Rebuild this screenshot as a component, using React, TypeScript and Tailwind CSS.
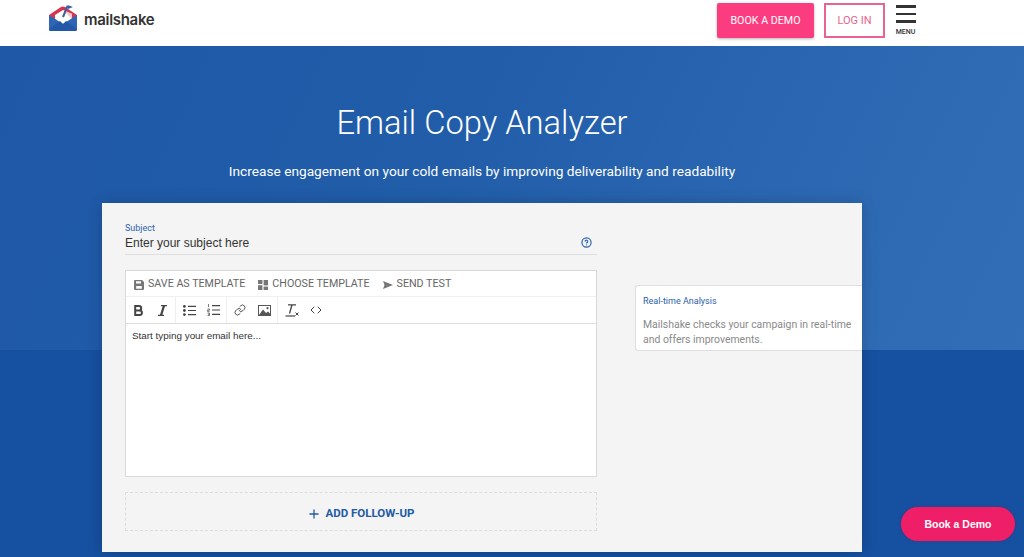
import { Link, Code, Plus, CircleHelp } from "lucide-react";

function Logo() {
  return (
    <svg width="30" height="28" viewBox="0 0 30 28">
      <path d="M1 11 L13 3 Q15 2 17 3 L29 11 L29 25 Q29 27 27 27 L3 27 Q1 27 1 25 Z" fill="#d9344f" />
      <path d="M7 11 L15 6 L24 10 L24 17 L15 21 L7 16 Z" fill="#ffffff" />
      <path d="M15 6 L24 10 L24 15 Z" fill="#f3c9d2" />
      <path d="M1 11 L15 20 L29 11 L29 25 Q29 27 27 27 L3 27 Q1 27 1 25 Z" fill="#2f66b5" />
      <path d="M1 25 L12 17 L15 20 L18 17 L29 25 Q29 27 27 27 L3 27 Q1 27 1 25 Z" fill="#2459a8" />
      <path d="M15 13 L19.5 2" stroke="#3d5f9e" strokeWidth="2" fill="none" />
      <path d="M19.5 1 L25 3 L20 5 Z" fill="#3d5f9e" />
    </svg>
  );
}

function SaveIcon() {
  return (
    <svg width="10" height="10" viewBox="0 0 10 10" className="shrink-0">
      <path fillRule="evenodd" d="M0 1 Q0 0 1 0 H8 L10 2 V9 Q10 10 9 10 H1 Q0 10 0 9 Z M2 1.2 V3.6 H7 V1.2 Z M2.2 6 V8.8 H7.8 V6 Z" fill="#777" />
    </svg>
  );
}

function GridIcon() {
  return (
    <svg width="10" height="10" viewBox="0 0 10 10" className="shrink-0">
      <rect x="0" y="0" width="4.4" height="4" fill="#777" />
      <rect x="5.6" y="0" width="4.4" height="5.4" fill="#777" />
      <rect x="0" y="5.2" width="4.4" height="4.8" fill="#777" />
      <rect x="5.6" y="6.6" width="4.4" height="3.4" fill="#777" />
    </svg>
  );
}

function SendIcon() {
  return (
    <svg width="10" height="8" viewBox="0 0 10 8" className="shrink-0">
      <path d="M0 0 L10 4 L0 8 L1.5 4 Z" fill="#777" />
    </svg>
  );
}

function BoldIcon() {
  return (
    <svg width="9" height="11" viewBox="0 0 9 11" className="shrink-0">
      <path d="M1.2 1 H5 a2.2 2.2 0 0 1 0 4.4 H1.2 Z M1.2 5.4 H5.6 a2.3 2.3 0 0 1 0 4.6 H1.2 Z" stroke="#444" strokeWidth="2" fill="none" />
    </svg>
  );
}

function ItalicIcon() {
  return (
    <svg width="9" height="11" viewBox="0 0 9 11" className="shrink-0">
      <path d="M3 0.7 H9 M0 10.3 H6" stroke="#444" strokeWidth="1.2" fill="none" />
      <path d="M6 0.7 L3 10.3" stroke="#444" strokeWidth="2.2" fill="none" />
    </svg>
  );
}

function BulletIcon() {
  return (
    <svg width="13" height="11" viewBox="0 0 13 11" className="shrink-0">
      <circle cx="1.4" cy="1.4" r="1.4" fill="#444" />
      <circle cx="1.4" cy="5.5" r="1.4" fill="#444" />
      <circle cx="1.4" cy="9.6" r="1.4" fill="#444" />
      <path d="M5 1.4 H13 M5 5.5 H13 M5 9.6 H13" stroke="#444" strokeWidth="1.2" />
    </svg>
  );
}

function NumberIcon() {
  return (
    <svg width="13" height="12" viewBox="0 0 13 12" className="shrink-0">
      <path d="M1.5 0 V3 M0.5 5 H2.5 V6.2 H0.5 V7.4 H2.5 M0.5 9 H2.5 V11.5 H0.5 M1 10.2 H2.5" stroke="#444" strokeWidth="0.7" fill="none" />
      <path d="M5 1.6 H13 M5 6 H13 M5 10.4 H13" stroke="#444" strokeWidth="1.2" />
    </svg>
  );
}

function PictureIcon() {
  return (
    <svg width="13" height="11" viewBox="0 0 13 11" className="shrink-0">
      <rect x="0.5" y="0.5" width="12" height="10" fill="#fff" stroke="#555" strokeWidth="1" />
      <path d="M1 10 L5 4.5 L8 8 L10 6.5 L12 8.5 V10 Z" fill="#555" />
      <circle cx="9.5" cy="3.2" r="1.1" fill="#555" />
    </svg>
  );
}

function ClearIcon() {
  return (
    <svg width="14" height="13" viewBox="0 0 14 13" className="shrink-0">
      <path d="M3 0.8 H11 M7 0.8 L4.5 9.5" stroke="#444" strokeWidth="1.3" fill="none" />
      <path d="M0.5 12 H10" stroke="#444" strokeWidth="1.2" />
      <path d="M10.5 8.5 L13.5 11.5 M13.5 8.5 L10.5 11.5" stroke="#444" strokeWidth="1" />
    </svg>
  );
}

export default function App() {
  return (
    <div className="w-[1024px] h-[557px] overflow-hidden relative font-['Roboto',sans-serif] bg-[#1650a0]">
      <header className="h-[46px] bg-white flex items-center">
        <div className="ml-[48px] flex items-center gap-[6px] -mt-[11px] h-[29px]">
          <Logo />
          <span className="text-[#333] text-[15px] font-semibold font-['Inter',sans-serif] tracking-[-0.3px] mt-[6px]">mailshake</span>
        </div>
        <div className="ml-auto mr-[108px] flex items-center -mt-[5px]">
          <button className="w-[97px] h-[35px] pt-[1px] bg-[#fb3d80] rounded-[2px] text-white text-[10.7px] shadow-[0_1px_3px_rgba(0,0,0,0.3)]">BOOK A DEMO</button>
          <button className="ml-[10px] w-[61px] h-[35px] pt-[1px] border-2 border-[#e8638f] text-[#e8638f] text-[11px]">LOG IN</button>
          <div className="ml-[10px] w-[21px] flex flex-col items-center">
            <div className="w-[20px] h-[2.5px] bg-[#333]" />
            <div className="w-[20px] h-[2.5px] bg-[#333] mt-[5px]" />
            <div className="w-[20px] h-[2.5px] bg-[#333] mt-[5px]" />
            <span className="text-[7px] font-medium text-[#333] mt-[5px] leading-[8px]">MENU</span>
          </div>
        </div>
      </header>

      <main className="h-[511px] bg-[linear-gradient(to_bottom,transparent_304px,#1650a0_304px),linear-gradient(115deg,#1e58a7_0%,#215da9_40%,#2f6bb5_80%,#326fb8_100%)]">
        <div className="w-[760px] ml-[102px]">
          <h1 className="text-center text-white font-light text-[32.7px] leading-[40px] pt-[57px]">Email Copy Analyzer</h1>
          <p className="text-center text-white text-[13.7px] leading-[20px] mt-[18px]">Increase engagement on your cold emails by improving deliverability and readability</p>

          <section className="mt-[22px] h-[349px] bg-[#f4f4f4] flex shadow-[0_0_14px_rgba(0,0,0,0.18)]">
            <div className="ml-[23px] w-[472px] shrink-0">
              <div className="pt-[20px] text-[9px] leading-[10px] text-[#2b62ab]">Subject</div>
              <div className="h-[22px] pb-[2px] flex items-center justify-between border-b border-[#dedede] text-[12px] text-[#333] pr-[5px] font-['Liberation_Sans',sans-serif]">
                <span>Enter your subject here</span>
                <CircleHelp size={11} className="text-[#2b62ab]" strokeWidth={2.6} />
              </div>

              <div className="mt-[15px] h-[207px] border border-[#d9d9d9] bg-white flex flex-col">
                <div className="h-[26px] flex items-center pl-[8px] pt-[2px] text-[10.7px] text-[#666] border-b border-[#f0f0f0]">
                  <SaveIcon />
                  <span className="ml-[4px]">SAVE AS TEMPLATE</span>
                  <span className="ml-[13px]"><GridIcon /></span>
                  <span className="ml-[4px]">CHOOSE TEMPLATE</span>
                  <span className="ml-[13px]"><SendIcon /></span>
                  <span className="ml-[4px]">SEND TEST</span>
                </div>
                <div className="h-[27px] flex items-center border-b border-[#dcdcdc] text-[#444]">
                  <div className="w-[50px] h-full flex items-center gap-[15px] pl-[8px] border-r border-[#efefef]"><BoldIcon /><ItalicIcon /></div>
                  <div className="w-[51px] h-full flex items-center gap-[11px] pl-[7px] border-r border-[#efefef]"><BulletIcon /><NumberIcon /></div>
                  <div className="w-[51px] h-full flex items-center gap-[12px] pl-[7px] border-r border-[#efefef]"><Link size={12} strokeWidth={1.8} /><PictureIcon /></div>
                  <div className="h-full flex items-center gap-[11px] pl-[7px]"><ClearIcon /><Code size={12} strokeWidth={2} /></div>
                </div>
                <div className="px-[6px] pt-[6px] text-[9.9px] leading-[12px] text-[#333] font-['Liberation_Sans',sans-serif]">Start typing your email here...</div>
              </div>

              <div className="mt-[15px] h-[39px] border border-dashed border-[#dcdcdc] flex items-center justify-center gap-[4px] pt-[4px] text-[#215aa6] text-[11.5px] font-bold">
                <Plus size={14} strokeWidth={2.2} />
                <span>ADD FOLLOW-UP</span>
              </div>
            </div>

            <aside className="ml-[38px] mt-[82px] w-[227px] h-[66px] bg-white border border-r-0 border-[#dedede] rounded-l-[3px] pl-[7px] pt-[9px]">
              <div className="text-[9px] leading-[12px] text-[#2b62ab]">Real-time Analysis</div>
              <p className="mt-[10px] text-[10.45px] leading-[15px] text-[#8a8a8a]">Mailshake checks your campaign in real-time<br />and offers improvements.</p>
            </aside>
          </section>
        </div>
      </main>

      <button className="absolute left-[901px] top-[507px] w-[114px] h-[34px] pt-[1px] rounded-full bg-[#ee1f66] text-white text-[10.5px] font-bold font-['Liberation_Sans',sans-serif] shadow-[0_0_3px_rgba(120,30,90,0.6)]">Book a Demo</button>
    </div>
  );
}
